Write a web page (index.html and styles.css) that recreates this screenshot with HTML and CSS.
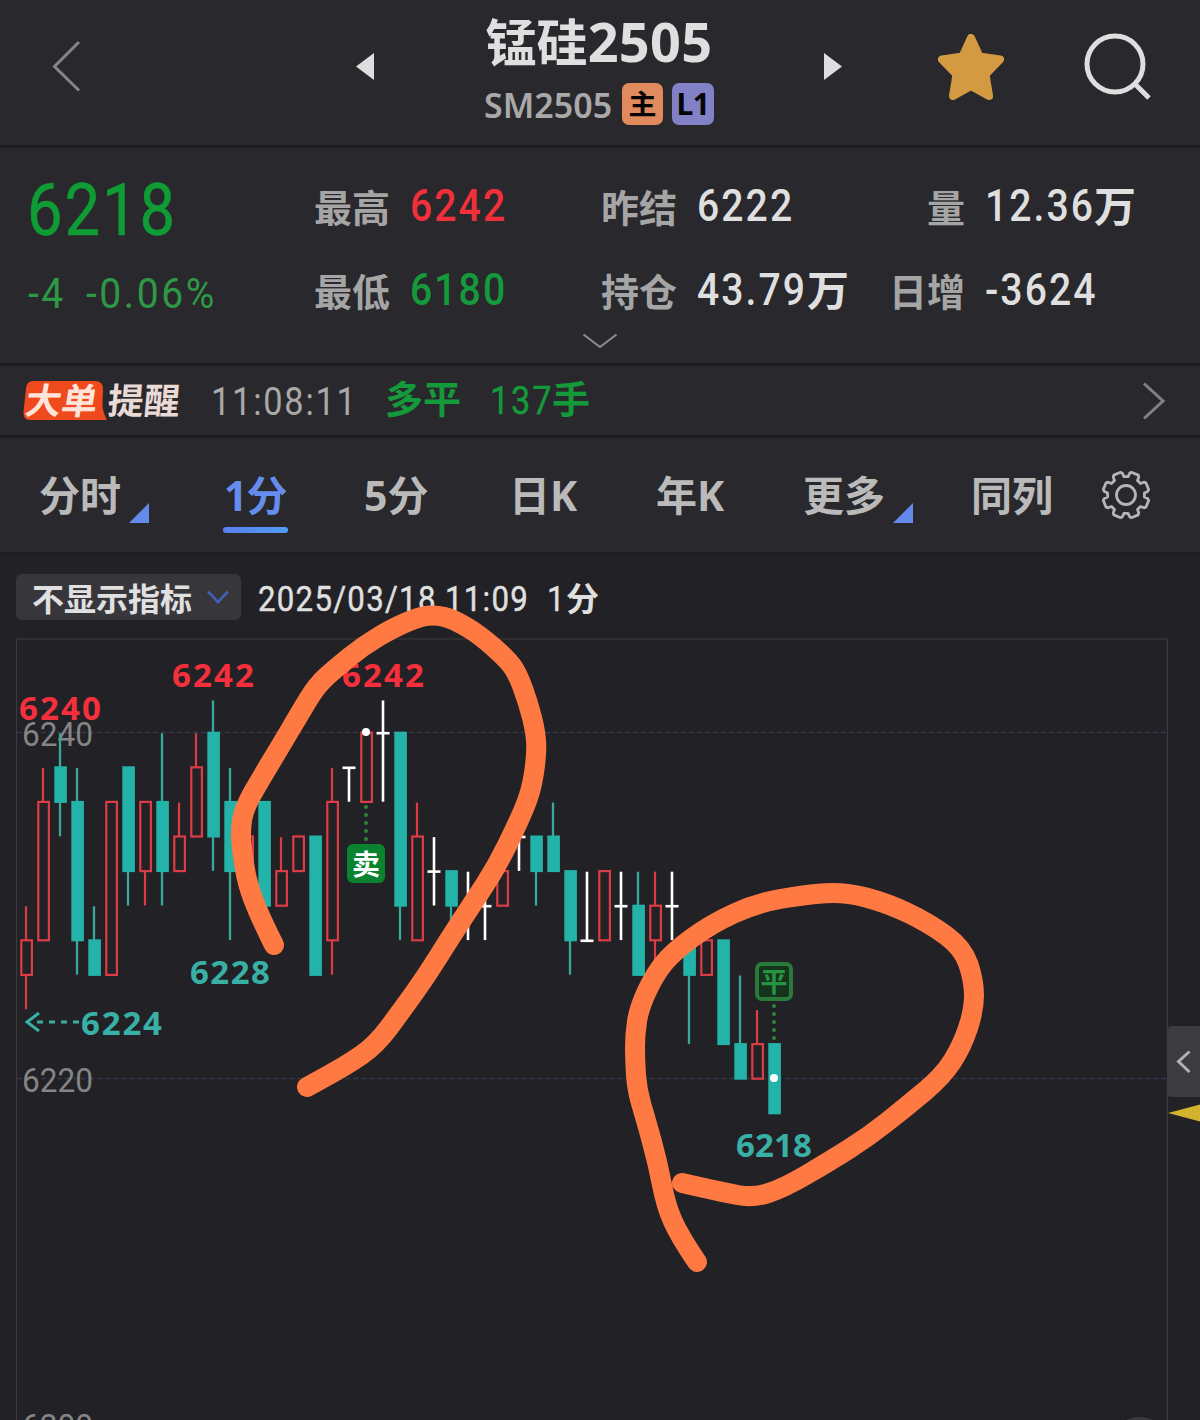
FILE: index.html
```html
<!DOCTYPE html>
<html lang="zh-CN">
<head>
<meta charset="utf-8">
<title>锰硅2505</title>
<link rel="stylesheet" href="styles.css">
</head>
<body>
<div class="app">
  <header class="topbar">
    <svg class="icon-back" viewBox="0 0 32 56"><path d="M28 4 3.5 28.5 28 52.5" /></svg>
    <svg class="icon-prev" viewBox="0 0 18 27"><path d="M18 0V27L0 13.5Z" /></svg>
    <div class="contract">
      <h1 class="contract-name">锰硅<span class="contract-month">2505</span></h1>
      <div class="contract-sub">
        <span class="contract-code">SM2505</span>
        <span class="badge badge-main">主</span>
        <span class="badge badge-level">L1</span>
      </div>
    </div>
    <svg class="icon-next" viewBox="0 0 18 27"><path d="M0 0V27L18 13.5Z" /></svg>
    <svg class="icon-star" viewBox="0 0 66 66"><path d="M33 4 L41.5 22.5 L62 25.500 L47.500 40.500 L51 62 L33 52 L15 62 L18.500 40.500 L4 25.500 L24.500 22.500 Z" /></svg>
    <svg class="icon-search" viewBox="0 0 68 68"><circle cx="31" cy="31" r="28" /><path d="M50 50 65 65" /></svg>
  </header>

  <section class="quote">
    <div class="last">
      <div class="last-price"><span class="num">6218</span></div>
      <div class="last-change"><span class="num">-4</span><span class="num">-0.06%</span></div>
    </div>
    <dl class="stats">
      <dt>最高</dt><dd class="up"><span class="num">6242</span></dd>
      <dt>昨结</dt><dd><span class="num">6222</span></dd>
      <dt>量</dt><dd><span class="num num-volume">12.36</span><span class="unit">万</span></dd>
      <dt>最低</dt><dd class="down"><span class="num">6180</span></dd>
      <dt>持仓</dt><dd><span class="num num-hold">43.79</span><span class="unit">万</span></dd>
      <dt>日增</dt><dd><span class="num">-3624</span></dd>
    </dl>
    <svg class="icon-expand" viewBox="0 0 36 18"><path d="M1.500 2.500 18 15 34.500 2.500" /></svg>
  </section>

  <section class="alert">
    <div class="alert-logo">
      <svg class="alert-shape" viewBox="0 0 84 39"><path d="M10 0H72Q80 0 80 8L79.500 22Q79 30 84 39H7Q0 39 .5 31L3 7Q4 0 10 0Z" /></svg>
      <span class="alert-big">大单</span><span class="alert-tip">提醒</span>
    </div>
    <span class="alert-time"><span class="num">11:08:11</span></span>
    <span class="alert-side">多平</span>
    <span class="alert-lots"><span class="num">137</span><span class="alert-unit">手</span></span>
    <svg class="icon-more" viewBox="0 0 24 40"><path d="M2 2.500 21 20 2 37.500" /></svg>
  </section>

  <nav class="tabs">
    <a class="tab tab-time">分时<i class="corner"></i></a>
    <a class="tab tab-m1 active">1分</a>
    <a class="tab tab-m5">5分</a>
    <a class="tab tab-day">日K</a>
    <a class="tab tab-year">年K</a>
    <a class="tab tab-more">更多<i class="corner"></i></a>
    <a class="tab tab-same">同列</a>
    <svg class="icon-gear" viewBox="-25 -25 50 50"><path id="gear" /><circle r="9.500" /></svg>
  </nav>

  <div class="chartbar">
    <button class="indicator">不显示指标<svg class="icon-drop" viewBox="0 0 24 16"><path d="M2 2.500 12 13 22 2.500" /></svg></button>
    <span class="num stamp-date">2025/03/18</span>
    <span class="num stamp-time">11:09</span>
    <span class="stamp-period"><span class="num">1</span>分</span>
  </div>

  <svg class="chart" viewBox="0 638 1200 782">
    <path class="frame" d="M16.500 1420V639H1167.500V1420" />
    <path class="grid" d="M17 732.500H1167M17 1078.500H1167" />
    <g class="axis">
      <text x="22" y="746" textLength="71" lengthAdjust="spacingAndGlyphs">6240</text>
      <text x="22" y="1092" textLength="71" lengthAdjust="spacingAndGlyphs">6220</text>
      <text x="22" y="1438" textLength="71" lengthAdjust="spacingAndGlyphs">6200</text>
    </g>
    <g id="candles"></g>
    <g class="mark high">
      <text x="19" y="720" textLength="82">6240</text>
      <text x="172" y="687" textLength="82">6242</text>
      <text x="342" y="687" textLength="82">6242</text>
    </g>
    <g class="mark low">
      <text x="190" y="984" textLength="80">6228</text>
      <text x="81" y="1035" textLength="81">6224</text>
      <text x="736" y="1157" textLength="76">6218</text>
      <path d="M39 1013 27 1022 39 1031" />
      <path d="M37 1022H80" stroke-dasharray="6 6" />
    </g>
    <g class="trade">
      <path class="dots" d="M366 807V840M774 1006V1039" />
      <rect class="sell" x="347" y="844" width="38" height="39" rx="6" />
      <text class="sell-text" x="366" y="875">卖</text>
      <rect class="close" x="757" y="964" width="34" height="35" rx="5" />
      <text class="close-text" x="774" y="992">平</text>
      <circle cx="366" cy="732" r="4" />
      <circle cx="774" cy="1078" r="4" />
    </g>
    <path class="handle" d="M1200 1026H1171Q1168 1026 1168 1029V1094Q1168 1097 1171 1097H1200Z" />
    <path class="handle-arrow" d="M1189.500 1051.500 1178.500 1061.500 1189.500 1072" />
    <path class="pointer" d="M1168 1113 1200 1104.500V1121.500Z" />
    <circle class="float" cx="1139.500" cy="1447" r="30" />
  </svg>
</div>
<svg class="ink" viewBox="0 0 1200 1420"><path id="ink1" /><path id="ink2" />
</svg>
<script src="chart.js"></script>
</body>
</html>
```
FILE: styles.css
```css
* { box-sizing: border-box; }
body {
  margin: 0;
  background: #222125;
  color: #dfdfdf;
  font-family: "Noto Sans", "Noto Sans CJK SC", sans-serif;
  font-weight: 700;
}
svg { display: block; fill: none; flex: none; }
.app { width: 1200px; height: 1420px; overflow: hidden; }

.num {
  display: inline-block;
  font-family: Roboto, sans-serif;
  font-weight: 500;
  letter-spacing: .052em;
  transform: scaleX(.88);
  transform-origin: 0 50%;
  white-space: nowrap;
}

/* top bar */
.topbar {
  display: flex;
  height: 148px;
  padding-left: 51px;
  background: #29282d;
  border-bottom: 3px solid #1e1e21;
}
.icon-back { width: 32px; height: 56px; margin-top: 38px; stroke: #858585; stroke-width: 3; }
.icon-prev, .icon-next { width: 18px; height: 27px; margin-top: 53px; fill: #dedede; }
.icon-prev { margin-left: 273px; }
.contract { width: 450px; text-align: center; }
.contract-name {
  display: flex; justify-content: center;
  height: 64px; margin: 9px 0 0;
  font-family: "Noto Sans CJK SC", sans-serif;
  font-size: 51px; line-height: 63px;
}
.contract-month { font-family: "Noto Sans", sans-serif; font-size: 54px; font-weight: 700; line-height: 65px; letter-spacing: .3px; }
.contract-sub { display: flex; justify-content: center; margin-top: 10px; height: 42px; line-height: 44px; }
.contract-code { width: 129px; font-size: 34px; font-weight: 600; color: #a9a9a9; margin-right: 9px; text-align: left; }
.badge { height: 42px; border-radius: 7px; color: #050505; }
.badge-main { width: 41px; margin-right: 9px; background: #e08a5e; font-family: "Noto Sans CJK SC", sans-serif; font-size: 28px; line-height: 41px; }
.badge-level { width: 42px; background: #8280c6; font-size: 30px; line-height: 42px; letter-spacing: -.5px; }
.icon-star { width: 66px; height: 66px; margin: 34px 0 0 96px; fill: #d49a42; stroke: #d49a42; stroke-width: 8; stroke-linejoin: round; }
.icon-search { width: 68px; height: 68px; margin: 33px 0 0 80px; stroke: #dedede; stroke-width: 5; }

/* quote */
.quote {
  display: grid;
  grid-template-columns: 286px 1fr;
  grid-template-rows: 184px 1fr;
  height: 218px;
  padding-left: 28px;
  background: #29282d;
  border-bottom: 3px solid #1e1e21;
}
.last { color: #0f9c35; }
.last-price { height: 90px; padding-top: 14px; margin-left: -1px; font-size: 72px; line-height: 90px; }
.last-price .num { font-weight: 400; letter-spacing: .03em; -webkit-text-stroke: .6px; }
.last-change { display: flex; gap: 17px; margin-top: 31px; font-size: 42px; line-height: 50px; color: #2f9845; }
.last-change .num { font-weight: 400; letter-spacing: .065em; transform: scaleX(.93); }
.stats {
  display: grid;
  grid-template-columns: 76px 190px 97px 198px 90px 1fr;
  grid-template-rows: 84px 84px;
  margin: 16px 0 0;
  line-height: 84px;
  font-family: "Noto Sans CJK SC", sans-serif;
}
.stats dt { font-size: 38px; color: #a5a5a5; }
.stats dd { display: flex; margin: 0; padding-left: 20px; font-size: 42px; white-space: nowrap; }
.stats dd .num { font-size: 44.500px; }
.stats dt:nth-of-type(3n+2) { padding-left: 21px; }
.stats dt:nth-of-type(3n) { text-align: right; }
.stats .up { color: #f2303b; }
.stats .down { color: #159a3b; }
.unit { margin-top: -2px; }
.num-volume { width: 109px; }
.num-hold { width: 110px; }
.icon-expand { grid-column: 1 / 3; width: 36px; height: 18px; margin-left: 553.500px; stroke: #8c8c8c; stroke-width: 2; }

/* big order alert */
.alert {
  display: flex;
  align-items: center;
  height: 72px;
  padding: 0 35px 0 23px;
  background: #29282d;
  border-bottom: 3px solid #1e1e21;
  font-family: "Noto Sans CJK SC", sans-serif;
  font-size: 38px;
}
.alert-logo { position: relative; display: flex; width: 188px; height: 39px; line-height: 35px; font-size: 36px; color: #e9dad5; }
.alert-shape { position: absolute; left: 0; top: 0; width: 84px; height: 39px; fill: #ee4a1e; }
.alert-big { position: relative; margin-left: 3px; width: 82px; color: #ffe4dc; transform: skewX(-9deg); transform-origin: 36px 50%; }
.alert-tip { transform: skewX(-5deg); }
.alert-time { width: 174px; margin-top: -6px; font-size: 39px; color: #a9a9a9; }
.alert-time .num { font-weight: 400; }
.alert-side { width: 105px; margin-top: -8px; color: #159a3b; }
.alert-lots { display: flex; align-items: center; color: #159a3b; }
.alert-lots .num { width: 62px; font-size: 39px; font-weight: 400; -webkit-text-stroke: .4px; }
.alert-unit { margin-top: -8px; }
.icon-more { width: 24px; height: 40px; margin-left: auto; margin-right: -1px; stroke: #828282; stroke-width: 3; }

/* tabs */
.tabs {
  display: flex;
  height: 117px;
  padding: 28px 0 0 39px;
  background: #29282d;
  border-bottom: 3px solid #1e1e21;
  font-size: 41px;
  line-height: 59px;
  color: #bababa;
}
.tab { position: relative; flex: none; height: 67px; white-space: nowrap; }
.tab-time { width: 184px; }
.tab-m1 { width: 65px; padding-left: 1px; margin-right: 76px; }
.tab-m5 { width: 145px; }
.tab-day { width: 147px; }
.tab-year { width: 147px; }
.tab-more { width: 168px; }
.tab-same { width: 130px; }
.tab.active { color: #668ded; letter-spacing: -1px; }
.tab.active::after { content: ""; position: absolute; left: 0; bottom: 0; width: 65px; height: 6px; border-radius: 3px; background: linear-gradient(90deg, #5a7eec, #4f9df5); }
.corner { position: absolute; left: 90px; top: 37px; width: 20px; height: 20px; background: #648bec; clip-path: polygon(100% 0, 100% 100%, 0 100%); }
.icon-gear { width: 50px; height: 50px; margin: 4px 0 0 0; stroke: #b5b5b5; stroke-width: 2.800; stroke-linejoin: round; }

/* chart toolbar */
.chartbar { display: flex; align-items: center; height: 83px; padding: 1px 0 0 16px; font-family: "Noto Sans CJK SC", sans-serif; font-size: 33px; }
.indicator {
  display: flex; align-items: center; gap: 14px;
  width: 225px; height: 46px; padding: 0 0 0 16px; margin: 0 17px 0 0;
  border: 0; border-radius: 6px; background: #37363b;
  color: #e0e0e0; font: inherit; font-size: 32px; line-height: 46px;
}
.icon-drop { width: 24px; height: 16px; stroke: #4060b4; stroke-width: 2.600; }
.chartbar .num { font-size: 35.500px; padding-top: 4px; font-weight: 400; -webkit-text-stroke: .5px; letter-spacing: .04em; }
.stamp-date { width: 187px; }
.stamp-time { width: 102px; }
.stamp-period { display: flex; align-items: center; }
.stamp-period .num { width: 19px; }

/* chart */
.chart { width: 1200px; height: 782px; }
.frame { stroke: #3c3b41; stroke-width: 1.200; }
.grid { stroke: #37384c; stroke-width: 1.500; stroke-dasharray: 5 3; }
.axis { fill: #858585; font: 400 34px Roboto, sans-serif; }
.mark { font: 700 33px "Noto Sans", sans-serif; }
.high { fill: #f5303c; }
.low { fill: #38b0a6; }
.low path { fill: none; stroke: #38b0a6; stroke-width: 3; }
.fall { fill: #23b3a8; }
.fall-wick { stroke: #3aa79d; stroke-width: 2.300; }
.rise, .rise-wick { stroke: #dc3c45; stroke-width: 2.200; }
.flat { stroke: #fff; stroke-width: 2.600; }
.trade { fill: #fff; font-family: "Noto Sans CJK SC", sans-serif; text-anchor: middle; }
.dots { stroke: #32853f; stroke-width: 4; stroke-linecap: round; stroke-dasharray: 0 8; }
.sell { fill: #0a8230; }
.sell-text { font-size: 28px; }
.close { fill: #16331c; stroke: #287b3a; stroke-width: 4; }
.close-text { font-size: 27px; fill: #249641; font-weight: 700; }
.handle { fill: #3c3b40; }
.handle-arrow { stroke: #b0b0b0; stroke-width: 3; }
.pointer { fill: #d2b32f; }
.float { fill: #3a393e; }

.ink { position: absolute; left: 0; top: 0; width: 1200px; height: 1420px; pointer-events: none; }
.ink path { stroke: #ff7a43; stroke-width: 20px; stroke-linecap: round; stroke-linejoin: round; }
```
FILE: chart.js
```js
// One row per minute: kind, high, body top, body bottom, low (g = fall, r = rise, w = flat)
const bars = [
  ['r',30,28,26,24],['r',38,36,28,28],['g',40,38,36,34],['g',38,36,28,26],['g',30,28,26,26],
  ['r',36,36,26,26],['g',38,38,32,30],['r',36,36,32,30],['g',40,36,32,30],['r',36,34,32,32],
  ['r',40,38,34,34],['g',41.9,40,34,32],['g',38,36,32,28],['r',34,34,32,32],['g',36,36,30,30],
  ['r',34,32,30,30],['r',34,34,32,32],['g',34,34,26,26],['r',38,36,28,26],['w',38,38,38,36],
  ['r',40,40,36,36],['w',41.9,40,40,36],['g',40,40,30,28],['r',36,34,28,28],['w',34,32,32,30],
  ['g',32,32,30,28],['w',32,30,30,28],['w',32,30,30,28],['r',32,32,30,30],['w',34,34,34,32],
  ['g',34,34,32,30],['g',36,34,32,32],['g',32,32,28,26],['w',32,28,28,28],['r',32,32,28,28],
  ['w',32,30,30,28],['g',32,30,26,26],['r',32,30,28,26],['w',32,30,30,28],['g',28,28,26,22],
  ['r',28,28,26,26],['g',28,28,22,22],['g',26,22,20,20],['r',24,22,20,20],['g',22,22,18,18]
];
const y = p => 732.5 + (40 - p) * 17.3;
let out = '';
bars.forEach(([kind, high, top, bottom, low], i) => {
  const x = 26 + i * 17;
  const wick = (a, b, cls) => a === b ? '' : `<path class="${cls}" d="M${x} ${y(a) + .8}V${y(b)}"/>`;
  if (kind === 'w') {
    out += wick(high, low, 'flat') + `<path class="flat" d="M${x - 6.5} ${y(top) + .7}H${x + 6.5}"/>`;
  } else if (kind === 'g') {
    out += wick(high, top, 'fall-wick') + wick(bottom, low, 'fall-wick');
    out += `<rect class="fall" x="${x - 5.7}" y="${y(top) - .8}" width="12.6" height="${y(bottom) - y(top) + 2}"/>`;
  } else {
    out += wick(high, top, 'rise-wick') + wick(bottom, low, 'rise-wick');
    out += `<rect class="rise" x="${x - 4.7}" y="${y(top) + .2}" width="10.6" height="${y(bottom) - y(top)}"/>`;
  }
});
document.getElementById('candles').innerHTML = out;

// Freehand strokes, smoothed through segment midpoints
function smooth(p) {
  let d = `M${p[0]}`;
  for (let i = 1; i < p.length - 1; i++) {
    const mx = (p[i][0] + p[i + 1][0]) / 2, my = (p[i][1] + p[i + 1][1]) / 2;
    d += `Q${p[i]} ${mx},${my}`;
  }
  return d + `L${p[p.length - 1]}`;
}
document.getElementById('ink1').setAttribute('d', smooth([
  [274,945],[260,917],[247,883],[242,850],[240.500,830],[244,808],[263,775],[280,747],[300,713],[317,685],
  [336,668],[363,646],[393,628],[420,616.500],[436,615],[453,619],[480,635],[509,661],[518,675],[528,702],
  [536,733],[536.500,757],[531,792],[518,823],[497,866],[473,903],[450,938],[427,975],[402,1010],[376,1045],
  [347,1065],[307,1087]]));
document.getElementById('ink2').setAttribute('d', smooth([
  [697,1262],[680,1237],[666,1206],[658,1164],[646,1120],[637,1090],[635,1060],[635,1035],[639,1008],
  [655,974],[673,952],[711,924],[757,903],[806,894.500],[845,892],[887,903],[929,923],[963,948],[974,981],
  [974,1010],[962,1046],[943,1076],[906,1107],[868,1137],[830,1161],[784,1188],[753,1198],[722,1192],[682,1183]]));

// Eight-lobed gear outline
const lobes = [];
for (let i = 0; i < 8; i++) {
  for (const [a, r] of [[-16, 18.500], [-13, 22], [-9, 23.300], [9, 23.300], [13, 22], [16, 18.500]]) {
    const t = (i * 45 + 22.5 + a) * Math.PI / 180;
    lobes.push(`${(r * Math.cos(t)).toFixed(1)} ${(r * Math.sin(t)).toFixed(1)}`);
  }
}
document.getElementById('gear').setAttribute('d', 'M' + lobes.join('L') + 'Z');
```
